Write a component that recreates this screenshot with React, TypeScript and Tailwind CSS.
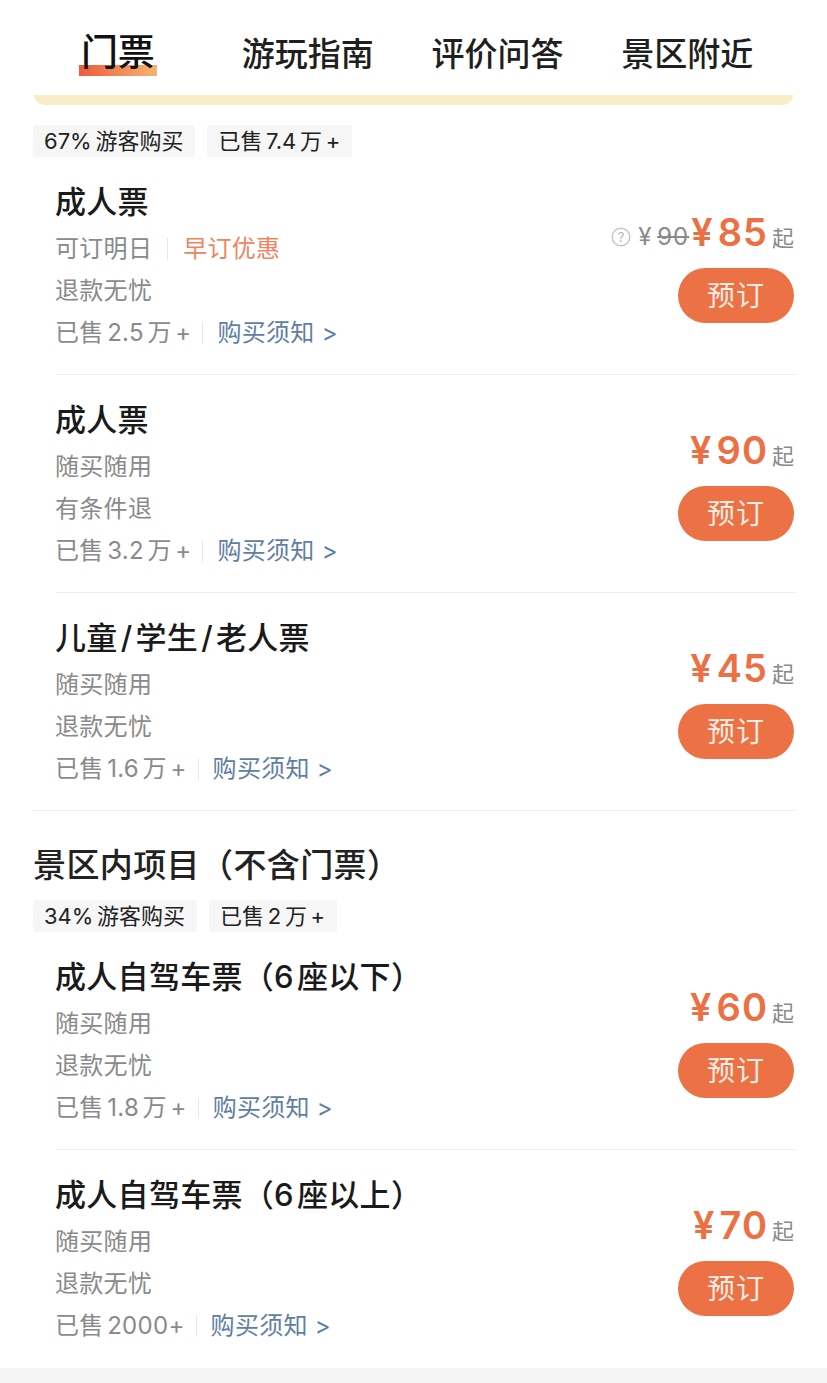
import React from "react";

const FONT = { fontFamily: 'Inter, "Noto Sans CJK SC", sans-serif' };

type Row = {
  title: string;
  line1: React.ReactNode;
  line2: string;
  sold: string;
  price: string;
  origin?: boolean;
  noBorder?: boolean;
  short?: boolean;
};

function Tag({ children }: { children: React.ReactNode }) {
  return (
    <span className="flex h-8 items-center rounded-[3px] bg-[#f6f6f6] pl-[11px] pr-[12px] text-[22px] leading-8 text-[#222222] whitespace-nowrap [word-spacing:-2.5px]">
      {children}
    </span>
  );
}

function TicketRow({ r }: { r: Row }) {
  return (
    <div className={`ml-[22px] mr-[-3px] flex justify-between pt-[29px] ${r.short ? "h-[217px]" : "h-[218px]"} ${r.noBorder ? "" : "border-b border-[#eeeeee]"}`}>
      <div className="min-w-0 -ml-px">
        <div className="h-8 text-[31px] leading-8 font-medium tracking-[0.3px] text-[#1a1a1a] whitespace-nowrap [word-spacing:-5.5px]">{r.title}</div>
        <div className="mt-[10px] flex h-[42px] items-center text-[24px] tracking-[0.3px] text-[#8a8a8a]">{r.line1}</div>
        <div className="flex h-[42px] items-center text-[24px] tracking-[0.3px] text-[#8a8a8a]">{r.line2}</div>
        <div className="flex h-[42px] items-center text-[24px] tracking-[0.3px] text-[#8a8a8a]">
          <span className="whitespace-nowrap [word-spacing:-3.5px]">{r.sold}</span>
          <span className="ml-[11px] mr-[14px] h-[22px] w-px bg-[#e8e8e8]" />
          <span className="whitespace-nowrap text-[#5f7ea3]">购买须知 &gt;</span>
        </div>
      </div>
      <div className="mr-[2px] flex flex-col items-end pt-[26px]">
        <div className="flex h-[40px] items-center whitespace-nowrap">
          {r.origin && (
            <>
              <svg width="20" height="20" viewBox="0 0 20 20" className="mr-[7px] mt-[10px]" fill="none">
                <circle cx="10" cy="10" r="8.8" stroke="#c4c4c4" strokeWidth="1.4" />
                <text x="10" y="14.5" textAnchor="middle" fontSize="13" fill="#b5b5b5" fontFamily="Inter, sans-serif">?</text>
              </svg>
              <span className="mr-[2px] pt-[10px] text-[24px] tracking-[1px] text-[#8a8a8a] [word-spacing:-3px]">¥ <span className="line-through">90</span></span>
            </>
          )}
          <span className="text-[38px] leading-10 font-semibold tracking-[1px] text-[#ec7044] [word-spacing:-6.5px]">¥ {r.price}</span>
          <span className="ml-[4px] pt-[12px] text-[22px] leading-8 text-[#8a8a8a]">起</span>
        </div>
        <button className="mt-[16px] h-[55px] w-[116px] rounded-[28px] bg-[#ec7245] text-[28px] tracking-[1px] text-[#fdeee6]">预订</button>
      </div>
    </div>
  );
}

const group1: Row[] = [
  {
    title: "成人票",
    line1: (
      <>
        <span>可订明日</span>
        <span className="mx-[15px] h-[22px] w-px bg-[#e8e8e8]" />
        <span className="text-[#ee855f]">早订优惠</span>
      </>
    ),
    line2: "退款无忧",
    sold: "已售 2.5 万 +",
    price: "85",
    origin: true,
  },
  { title: "成人票", line1: "随买随用", line2: "有条件退", sold: "已售 3.2 万 +", price: "90" },
  { title: "儿童 / 学生 / 老人票", line1: "随买随用", line2: "退款无忧", sold: "已售 1.6 万 +", price: "45", noBorder: true, short: true },
];

const group2: Row[] = [
  { title: "成人自驾车票（6 座以下）", line1: "随买随用", line2: "退款无忧", sold: "已售 1.8 万 +", price: "60" },
  { title: "成人自驾车票（6 座以上）", line1: "随买随用", line2: "退款无忧", sold: "已售 2000+", price: "70", noBorder: true },
];

export default function App() {
  return (
    <div className="h-[1383px] w-[827px] overflow-hidden bg-white" style={FONT}>
      <div className="grid h-[95px] grid-cols-4 pl-[23px] pr-[45px] text-center text-[33px] font-medium text-[#1f1f1f]">
        <div className="flex justify-center pt-[30px]">
          <span className="relative h-[45px] whitespace-nowrap text-[37px] leading-[45px] text-[#111111]">
            <span className="absolute bottom-[-1px] left-[-2px] right-[-2px] h-[11px] bg-gradient-to-r from-[#ea5a3c] to-[#f5b26f]" />
            <span className="relative">门票</span>
          </span>
        </div>
        <div className="pt-[34px] leading-10 whitespace-nowrap">游玩指南</div>
        <div className="pt-[34px] leading-10 whitespace-nowrap">评价问答</div>
        <div className="pt-[34px] leading-10 whitespace-nowrap">景区附近</div>
      </div>
      <div className="ml-[34px] h-[10px] w-[759px] rounded-b-[10px] bg-[#faecc6]" />
      <div className="mx-[34px]">
        <div className="-ml-px mt-[20px] flex gap-[12px]">
          <Tag>67% 游客购买</Tag>
          <Tag>已售 7.4 万 +</Tag>
        </div>
        <div className="ml-[-1px] mr-[-3px] border-b border-[#eeeeee]">
          <div className="ml-px mr-[3px]">
            {group1.map((r, i) => (
              <TicketRow key={i} r={r} />
            ))}
          </div>
        </div>
        <div className="-ml-px mt-[34px] h-10 text-[33px] leading-10 font-medium tracking-[0.4px] text-[#222222] whitespace-nowrap">景区内项目（不含门票）</div>
        <div className="-ml-px mt-[15px] flex gap-[12px]">
          <Tag>34% 游客购买</Tag>
          <Tag>已售 2 万 +</Tag>
        </div>
        {group2.map((r, i) => (
          <TicketRow key={i} r={r} />
        ))}
      </div>
      <div className="h-[20px] bg-[#f5f5f5]" />
    </div>
  );
}
